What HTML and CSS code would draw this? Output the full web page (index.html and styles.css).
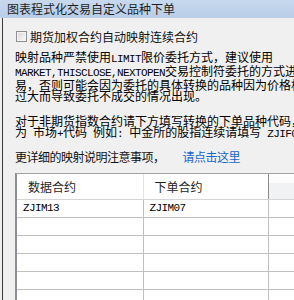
FILE: index.html
```html
<!DOCTYPE html>
<html lang="zh-cn">

<head>
    <meta charset="UTF-8">
    <meta name="viewport" content="width=device-width, initial-scale=1.0">
    <link rel="stylesheet" href="styles.css">
    <title>图表程式化交易自定义品种下单</title>
</head>

<body>
    <div class="janela">
        <div class="titulo">图表程式化交易自定义品种下单</div>
        <div class="conteudo">
            <label class="opcao">
                <span class="caixa"></span>期货加权合约自动映射连续合约
            </label>
            <p class="aviso">映射品种严禁使用<span class="en">LIMIT</span>限价委托方式，建议使用<br><span class="en">MARKET,THISCLOSE,NEXTOPEN</span>交易控制符委托的方式进行交<br>易，否则可能会因为委托的具体转换的品种因为价格相差<br>过大而导致委托不成交的情况出现。</p>
            <p class="aviso">对于非期货指数合约请下方填写转换的下单品种代码，<br>为<span class="en"> </span>市场<span class="en">+</span>代码<span class="en"> </span>例如<span class="en">: </span>中金所的股指连续请填写<span class="en"> ZJIF00</span></p>
            <div class="mais">更详细的映射说明注意事项，<a class="link">请点击这里</a></div>
            <div class="grade">
                <table>
                    <tr class="cab">
                        <th class="c1">数据合约</th>
                        <th class="c2">下单合约</th>
                        <th class="c3"></th>
                    </tr>
                    <tr><td class="c1">ZJIM13</td><td class="c2">ZJIM07</td><td class="c3"></td></tr>
                    <tr><td class="c1"></td><td class="c2"></td><td class="c3"></td></tr>
                    <tr><td class="c1"></td><td class="c2"></td><td class="c3"></td></tr>
                    <tr><td class="c1"></td><td class="c2"></td><td class="c3"></td></tr>
                    <tr><td class="c1"></td><td class="c2"></td><td class="c3"></td></tr>
                    <tr><td class="c1"></td><td class="c2"></td><td class="c3"></td></tr>
                </table>
            </div>
        </div>
    </div>
</body>

</html>
```

FILE: styles.css
```css
* {
    margin: 0;
    padding: 0;
    box-sizing: border-box;
    font-family: "Noto Sans CJK SC", sans-serif;
}

body {
    background-color: #f0f0f0;
}

.janela {
    width: 294px;
    height: 300px;
    overflow: hidden;
    display: flex;
    flex-direction: column;
}

.titulo {
    height: 20px;
    padding-left: 7px;
    line-height: 18px;
    font-size: 12px;
    color: #1e1e1e;
    white-space: nowrap;
    background: linear-gradient(#c6d9ee, #b9cde7);
}

.conteudo {
    flex: 1;
    margin-left: 2px;
    border-left: 1px solid #3a3a3a;
    padding-left: 12px;
    display: flex;
    flex-direction: column;
}

.opcao {
    margin-top: 12px;
    height: 13px;
    display: flex;
    align-items: center;
    font-size: 12px;
    color: #111;
    white-space: nowrap;
}

.caixa {
    width: 11px;
    height: 11px;
    margin-left: 1px;
    margin-right: 3px;
    border: 1px solid #8e8f8f;
    background: linear-gradient(135deg, #d6d6d6, #fbfbfb);
    box-shadow: inset 0 0 0 1px #f4f4f4;
}

.aviso {
    font-size: 12px;
    line-height: 11px;
    color: #000;
    white-space: nowrap;
    margin-top: 8px;
}

.aviso + .aviso {
    margin-top: 14px;
}

.en {
    font-family: "Liberation Mono", monospace;
    font-size: 11px;
    letter-spacing: -0.6px;
}

.mais {
    margin-top: 10px;
    height: 14px;
    line-height: 14px;
    font-size: 12px;
    letter-spacing: -0.5px;
    color: #111;
    white-space: nowrap;
}

.link {
    margin-left: 18px;
    color: #1466cc;
}

.grade {
    margin-top: 9px;
    width: 300px;
    border-top: 1px solid #a3a3a3;
    border-left: 2px solid #8d8f96;
    background-color: #fff;
}

table {
    border-collapse: collapse;
    table-layout: fixed;
    width: 320px;
}

th {
    height: 25px;
    padding-left: 11px;
    text-align: left;
    font-weight: normal;
    font-size: 12px;
    color: #1e1e1e;
    border-bottom: 1px solid #d5d5d5;
}

th.c1 {
    border-right: 1px solid #e2e2e2;
}

th.c2 {
    border-right: 1px solid #8a8a8a;
}

th.c3 {
    background: linear-gradient(#fdfdfd 0 35%, #f1f2f4 35%);
}

td {
    height: 18px;
    padding-left: 6px;
    font-family: "Liberation Mono", monospace;
    font-size: 11px;
    letter-spacing: -0.6px;
    color: #000;
    border-bottom: 1px solid #c0c0c0;
    border-right: 1px solid #c0c0c0;
}

.c1 {
    width: 126px;
}

.c2 {
    width: 125px;
}
```
